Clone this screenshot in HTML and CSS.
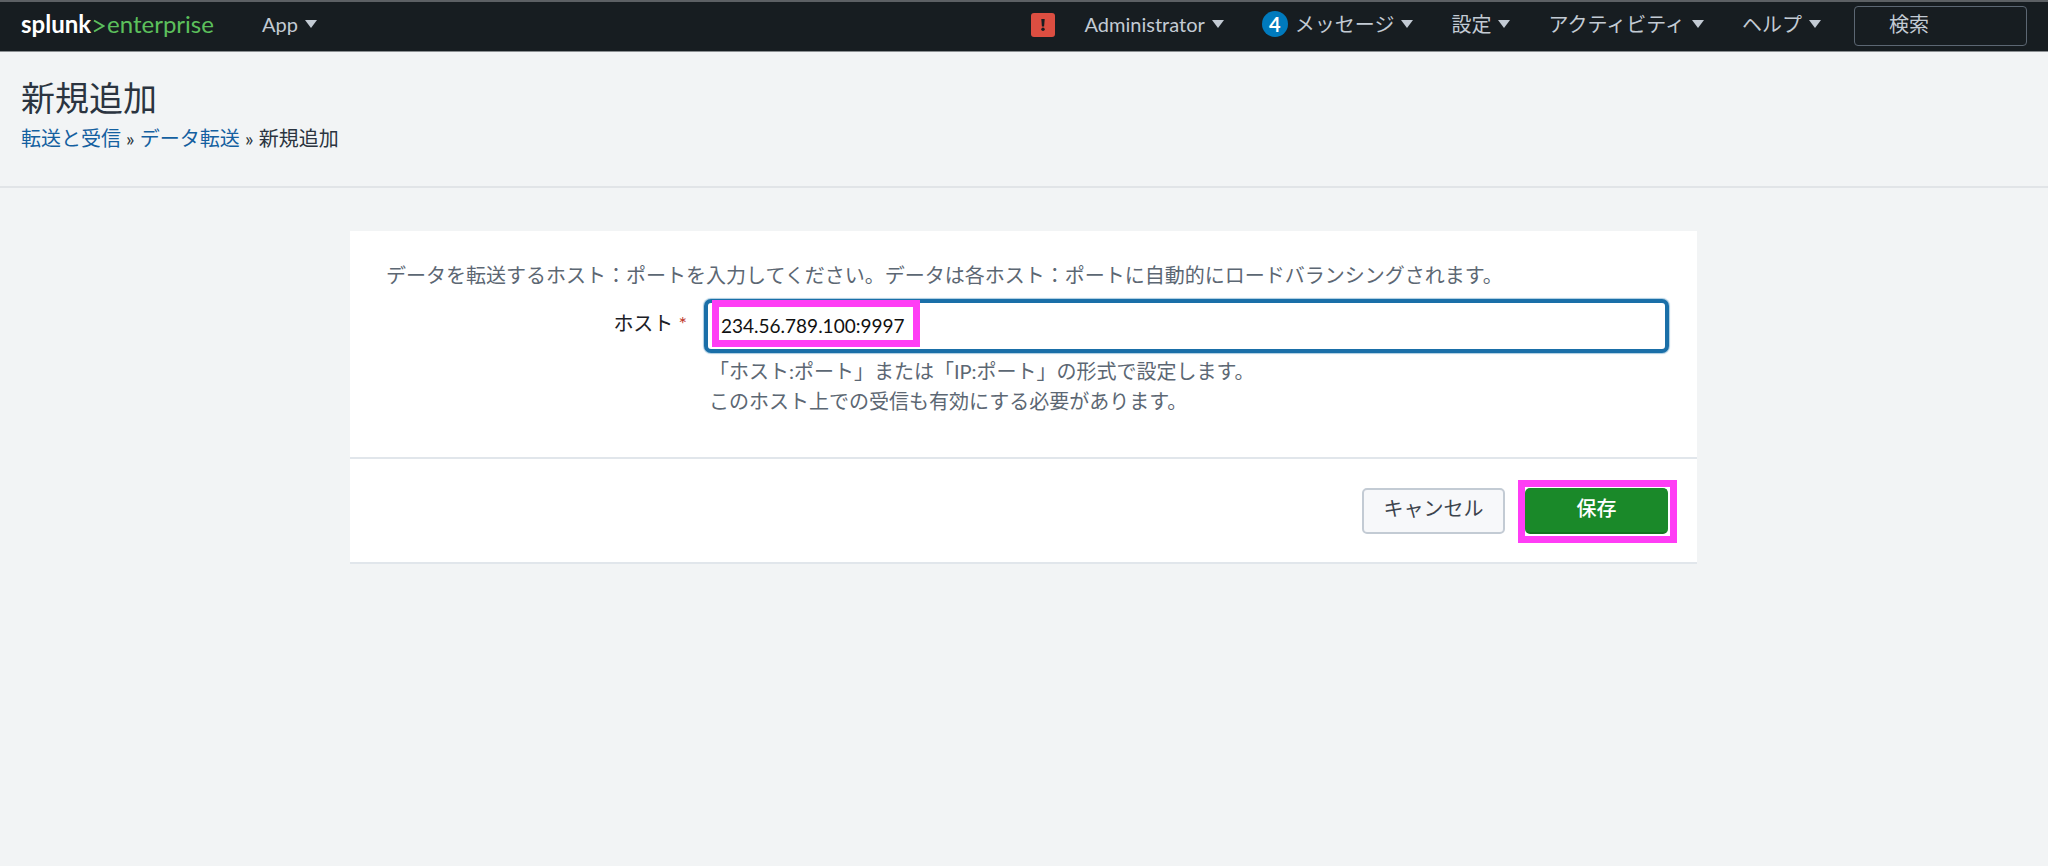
FILE: index.html
```
<!DOCTYPE html>
<html lang="ja">
<head>
<meta charset="utf-8">
<title>新規追加 | Splunk</title>
<link rel="stylesheet" href="styles.css">
</head>
<body>
<header class="navbar">
  <a class="logo" href="#"><span class="logo-name">splunk</span><svg class="logo-mark" viewBox="0 0 12 14" aria-hidden="true"><path d="M1 1.5 10.500 7 1 12.500"/></svg><span class="logo-product">enterprise</span></a>
  <button class="nav-item nav-app" type="button">App<span class="caret"></span></button>
  <nav class="nav-right">
    <button class="alert" type="button" aria-label="警告"><svg viewBox="0 0 24 24" aria-hidden="true"><path d="M10.300 6h3.400l-.6 7.500h-2.200z"/><circle cx="12" cy="16.200" r="1.700"/></svg></button>
    <button class="nav-item" type="button">Administrator<span class="caret"></span></button>
    <button class="nav-item" type="button"><span class="count">4</span>メッセージ<span class="caret"></span></button>
    <button class="nav-item" type="button">設定<span class="caret"></span></button>
    <button class="nav-item" type="button">アクティビティ<span class="caret"></span></button>
    <button class="nav-item" type="button">ヘルプ<span class="caret"></span></button>
    <input class="search" type="text" placeholder="検索" aria-label="検索">
  </nav>
</header>
<section class="page-head">
  <h1 class="title">新規追加</h1>
  <p class="breadcrumb"><a href="#">転送と受信</a> » <a href="#">データ転送</a> » 新規追加</p>
</section>
<main class="main">
  <form class="card">
    <div class="card-body">
      <p class="intro">データを転送するホスト：ポートを入力してください。データは各ホスト：ポートに自動的にロードバランシングされます。</p>
      <div class="row">
        <label class="label" for="host">ホスト <span class="required">*</span></label>
        <div class="field">
          <input class="text-input" id="host" type="text" value="234.56.789.100:9997">
          <span class="mark mark-value"></span>
        </div>
        <p class="help">「ホスト:ポート」または「IP:ポート」の形式で設定します。<br>このホスト上での受信も有効にする必要があります。</p>
      </div>
    </div>
    <div class="actions">
      <button class="btn" type="button">キャンセル</button>
      <div class="save">
        <button class="btn btn-primary" type="button">保存</button>
        <span class="mark mark-save"></span>
      </div>
    </div>
  </form>
</main>
</body>
</html>
```
FILE: styles.css
```
* { box-sizing: border-box; }
body {
  margin: 0;
  min-height: 100vh;
  background: #f2f4f5;
  color: #2b3440;
  font: 20px/30px Lato, "Noto Sans CJK JP", sans-serif;
}
h1, p { margin: 0; }
a { color: #1460a0; text-decoration: none; }
button, input { font: inherit; }

.navbar {
  display: flex;
  align-items: center;
  height: 52px;
  padding: 0 21px 2px;
  background: #171d21;
  border-top: 2px solid #5c6064;
  border-bottom: 1px solid #8b8f92;
}
.logo {
  display: flex;
  align-items: center;
  padding-bottom: 3px;
  color: #fff;
  font-size: 24px;
}
.logo-name { font-weight: 700; }
.logo-mark { width: 12px; height: 14px; margin: 3px 2px 0; }
.logo-mark path { fill: none; stroke: #5cc05c; stroke-width: 2; }
.logo-product { color: #5cc05c; }
.nav-item {
  display: flex;
  align-items: center;
  padding: 0 0 3px;
  border: 0;
  background: none;
  color: #c3cbd4;
  white-space: nowrap;
}
.nav-app { margin-left: 48px; }
.caret {
  margin-left: 7px;
  border: 6px solid transparent;
  border-top: 8px solid #c3cbd4;
  border-bottom: 0;
}
.nav-right {
  display: flex;
  align-items: center;
  gap: 38px;
  margin-left: auto;
}
.alert {
  width: 24px;
  height: 24px;
  margin: 0 -8px 2px 0;
  padding: 0;
  border: 0;
  border-radius: 3px;
  background: #dc4e41;
}
.alert svg { display: block; fill: #171d21; }
.count {
  width: 26px;
  height: 26px;
  margin-right: 7px;
  border-radius: 50%;
  background: #007abd;
  color: #fff;
  font-weight: 700;
  line-height: 26px;
}
.search {
  width: 173px;
  height: 40px;
  margin-left: -5px;
  padding: 0 34px 4px;
  border: 1px solid #5c6773;
  border-radius: 4px;
  background: transparent;
  color: #c3cbd4;
}
.search::placeholder { color: #c3cbd4; opacity: 1; }

.page-head {
  padding: 23px 21px 33px;
  border-bottom: 2px solid #e1e4e7;
}
.title { margin-bottom: 2px; font-size: 34px; font-weight: 400; line-height: 46px; }

.main { padding: 43px 21px 43px 20px; }
.card {
  max-width: 1347px;
  margin: 0 auto;
  background: #fff;
  border-bottom: 2px solid #e1e6eb;
}
.card-body { padding: 29px 28px 41px 36px; }
.intro { color: #5c6773; }
.row {
  display: grid;
  grid-template-columns: 301px 1fr;
  column-gap: 17px;
  margin-top: 9px;
}
.label {
  padding-top: 9px;
  color: #1b2026;
  text-align: right;
}
.required { color: #c0392b; }
.field { position: relative; display: flex; }
.text-input {
  width: 100%;
  height: 54px;
  padding: 0 13px 2px;
  border: 4px solid #1a6fa8;
  border-radius: 7px;
  outline: 0;
  background: #fff;
  box-shadow: 0 0 1px 1px #a9cbe0;
  color: #111;
  font-size: 19px;
}
.help { grid-column: 2; padding: 3px 0 0 5px; color: #5c6773; }
.mark { position: absolute; border: 7px solid #ff3df5; pointer-events: none; }
.mark-value { left: 8px; top: 1px; width: 208px; height: 47px; }
.mark-save { inset: -8px -9px -9px -7px; }

.actions {
  display: flex;
  justify-content: flex-end;
  gap: 20px;
  padding: 29px 29px 28px;
  border-top: 2px solid #e1e6eb;
}
.save { position: relative; display: flex; }
.btn {
  width: 143px;
  height: 46px;
  padding: 0 0 6px;
  border: 2px solid #c3cbd4;
  border-radius: 5px;
  background: #f7f8fa;
  color: #3c444d;
}
.btn-primary {
  border-color: #1a8929;
  border-bottom-color: #167323;
  background: #1a8929;
  color: #fff;
  font-weight: 500;
}
```
